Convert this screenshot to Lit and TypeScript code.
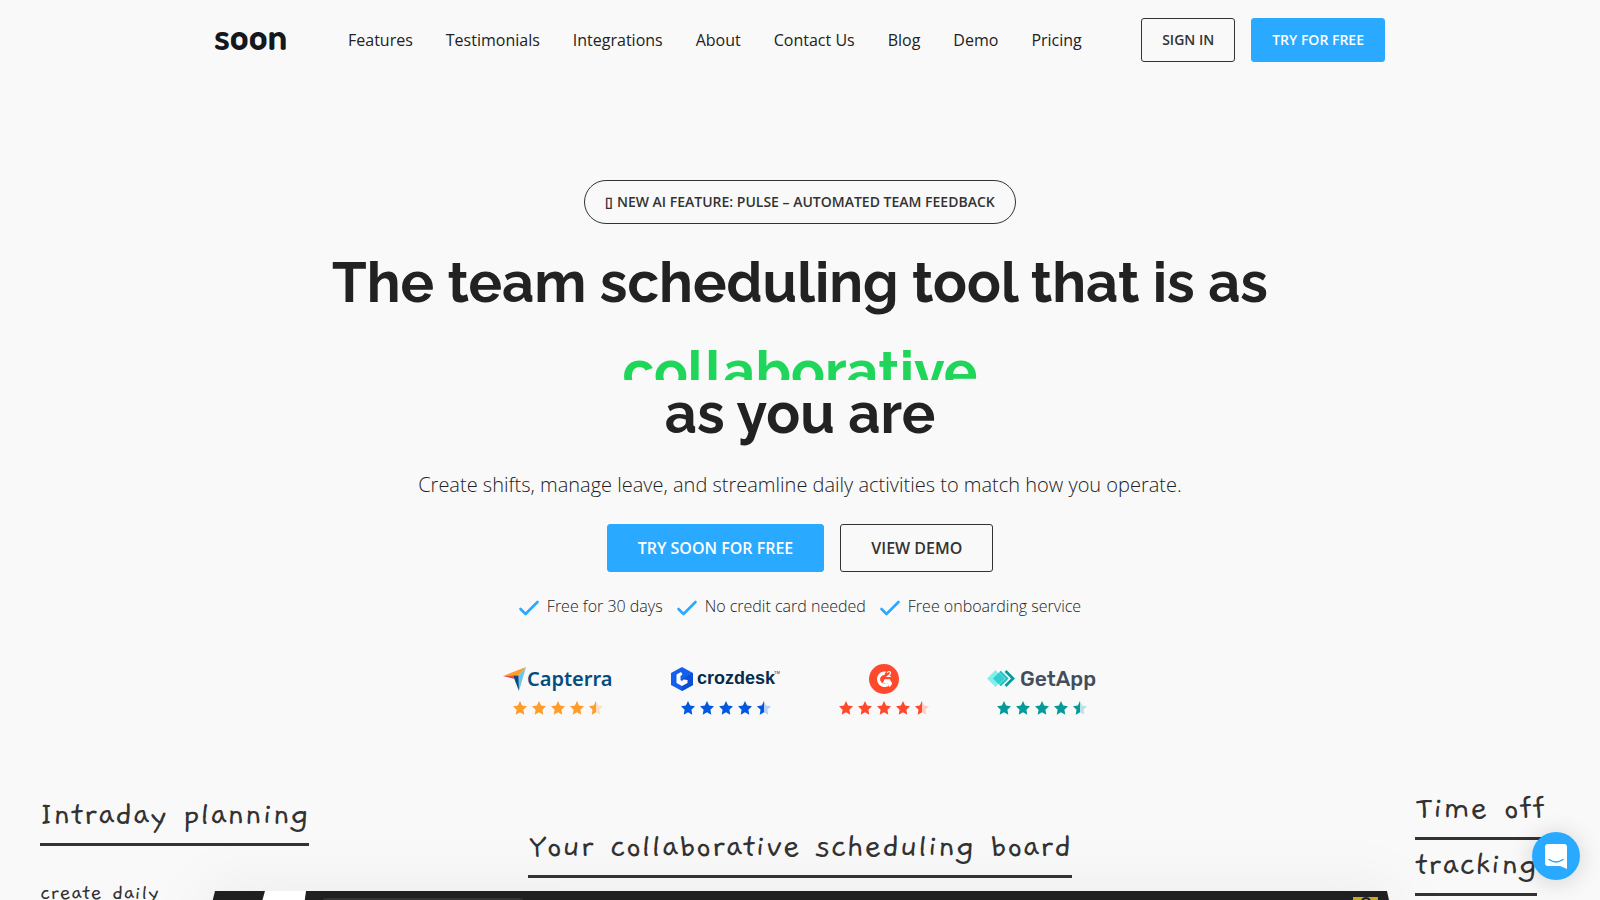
import { LitElement, html, css, svg } from "lit";
import { customElement, property } from "lit/decorators.js";

const STAR = "M7 0 L9.1 4.6 L14 5.2 L10.4 8.7 L11.3 13.8 L7 11.3 L2.7 13.8 L3.6 8.7 L0 5.2 L4.9 4.6 Z";
const HALF = "M7 0 L4.9 4.6 L0 5.2 L3.6 8.7 L2.7 13.8 L7 11.3 Z";

@customElement("star-rating")
export class StarRating extends LitElement {
  @property() color = "#000";

  static styles = css`
    :host {
      display: block;
      height: 14px;
    }
    svg {
      display: block;
    }
  `;

  render() {
    return html`<svg width="90" height="14" viewBox="0 0 90 14" role="img" aria-label="4.5 out of 5 stars" fill=${this.color}>
      ${[0, 1, 2, 3].map((i) => svg`<path d=${STAR} transform="translate(${i * 19} 0)"></path>`)}
      <path d=${STAR} transform="translate(76 0)" opacity="0.25"></path>
      <path d=${HALF} transform="translate(76 0)"></path>
    </svg>`;
  }
}

const capterra = html`<svg width="110" height="30" viewBox="0 0 110 30" role="img" aria-label="Capterra">
  <path d="M0 12 L23 3 L15.500 11.500 Z" fill="#ff9d28"></path>
  <path d="M15.500 11.500 L23 3 L16 27 Z" fill="#68c5ed"></path>
  <path d="M10 11.500 L15.500 11.500 L16 27 Z" fill="#044d80"></path>
  <path d="M0 12 L10 11.500 L11.500 15 Z" fill="#e54747"></path>
  <text class="noto" x="24" y="22" font-size="20" fill="#044d80">Capterra</text>
</svg>`;

const crozdesk = html`<svg width="110" height="30" viewBox="0 0 110 30" role="img" aria-label="Crozdesk">
  <path d="M11 3 L22 9 V21 L11 27 L0 21 V9 Z" fill="#1360f0"></path>
  <path d="M22 9 V21 L11 27 V15 Z" fill="#0a4fd6"></path>
  <path d="M10 8 L5.500 10.500 V19 L11 22 L16.500 19 V16 L12.500 15.500 L11 17 L9.500 16 V12 L11.500 10.500 Z" fill="#fff"></path>
  <text class="sans" x="26" y="20" font-size="18" font-weight="700" fill="#052c4c">crozdesk</text>
  <text class="sans" x="103" y="10" font-size="4" fill="#052c4c">TM</text>
</svg>`;

const g2 = html`<svg width="30" height="30" viewBox="0 0 30 30" role="img" aria-label="G2">
  <circle cx="15" cy="15" r="15" fill="#ff492c"></circle>
  <path d="M17 7.500 A7.800 7.800 0 1 0 20 21.800 L18 18.500 A4.200 4.200 0 1 1 15.400 11.100 Z" fill="#fff"></path>
  <path d="M15.600 15.300 H20.800 L23.200 19.500 L20.800 23.200 L18.600 19.300 H13.800 Z" fill="#fff"></path>
  <path d="M18.300 8.800 Q18.600 7.500 20 7.500 Q21.600 7.600 21.500 9 Q21.400 10.300 18.700 12.300 H21.800" fill="none" stroke="#fff" stroke-width="1.200"></path>
</svg>`;

const getapp = html`<svg width="110" height="30" viewBox="0 0 110 30" role="img" aria-label="GetApp">
  <path d="M8.500 6 L17 14.500 L8.500 23 L0 14.500 Z" fill="#7ff0ee"></path>
  <path d="M12 8.500 L18 14.500 L12 20.500 L6 14.500 Z" fill="#2fd0cf"></path>
  <path d="M13 7.500 L20 14.500 L13 21.500" fill="none" stroke="#24bfc0" stroke-width="2.400"></path>
  <path d="M18.500 7 L26 14.500 L18.500 22" fill="none" stroke="#089b9d" stroke-width="2.800"></path>
  <text class="rubik" x="33" y="22" font-size="21" fill="#434d5b">GetApp</text>
</svg>`;

const check = html`<svg class="check" width="20" height="16" viewBox="0 0 20 16" aria-hidden="true">
  <path d="M1.500 9 L6.500 14 L18.500 2" fill="none" stroke="#29a9ff" stroke-width="2.600" stroke-linecap="round" stroke-linejoin="round"></path>
</svg>`;

@customElement("app-root")
export class AppRoot extends LitElement {
  static styles = css`
    :host {
      display: block;
      height: 100vh;
      overflow: hidden;
      background: #f9f9f9;
      color: #222;
      font: 400 16px/24px "Open Sans", sans-serif;
    }
    * {
      box-sizing: border-box;
    }
    h1,
    h2,
    p,
    ul {
      margin: 0;
      padding: 0;
    }
    ul {
      list-style: none;
    }
    a {
      color: inherit;
      text-decoration: none;
    }
    svg {
      display: block;
      overflow: visible;
    }
    .header {
      display: flex;
      align-items: center;
      max-width: 1170px;
      height: 80px;
      margin: 0 auto;
    }
    .brand {
      width: 133px;
    }
    .brand-text {
      font: 700 38px Dosis, "Roboto Condensed", Roboto, sans-serif;
    }
    .nav {
      display: flex;
      flex: 1;
      gap: 33px;
    }
    .actions {
      display: flex;
      gap: 16px;
    }
    .btn {
      display: flex;
      align-items: center;
      height: 44px;
      padding: 0 20px;
      border: 1px solid #333;
      border-radius: 3px;
      color: #333;
      font-size: 14px;
      font-weight: 600;
      text-transform: uppercase;
      white-space: nowrap;
    }
    .btn.primary {
      border-color: #29a9ff;
      background: #29a9ff;
      color: #fff;
    }
    .btn.large {
      height: 48px;
      padding: 0 30px;
      font-size: 16px;
    }
    .btn.pill {
      border-radius: 22px;
    }
    .hero {
      display: flex;
      flex-direction: column;
      align-items: center;
      padding-top: 100px;
    }
    .title {
      margin-top: 25px;
      font: 700 56px/67px Raleway, Lato, sans-serif;
      text-align: center;
    }
    .title span {
      display: block;
    }
    .title .rotator {
      height: 64px;
      padding-top: 22px;
      overflow: hidden;
      color: #1fd65b;
    }
    .lead {
      margin-top: 23px;
      font-size: 20px;
      font-weight: 300;
      line-height: 30px;
    }
    .cta {
      display: flex;
      gap: 16px;
      margin-top: 24px;
    }
    .perks {
      display: flex;
      gap: 14px;
      margin-top: 22px;
      font-weight: 300;
    }
    .perks li {
      display: flex;
      align-items: center;
      gap: 8px;
    }
    .check {
      margin-top: 4px;
    }
    .ratings {
      display: flex;
      gap: 58px;
      margin-top: 46px;
    }
    .ratings li {
      display: flex;
      flex-direction: column;
      align-items: center;
      gap: 7px;
    }
    .noto {
      font-family: "Noto Sans", sans-serif;
      font-weight: 600;
    }
    .sans {
      font-family: "Liberation Sans", sans-serif;
    }
    .rubik {
      font-family: Rubik, Inter, sans-serif;
      font-weight: 500;
    }
    .showcase {
      display: grid;
      grid-template-columns: 1fr auto 1fr;
      grid-template-rows: auto auto;
      padding: 66px 40px 0;
      color: #333;
    }
    .note {
      font-family: Gaegu, Lato, sans-serif;
    }
    .note h2 {
      font-size: 37px;
      font-weight: 400;
      line-height: 56px;
    }
    .note h2 span {
      padding-bottom: 10px;
      border-bottom: 3px solid #333;
    }
    .note p {
      margin-top: 34px;
      font-size: 24px;
      line-height: 32px;
    }
    .left {
      grid-area: 1 / 1 / 3 / 2;
      padding-top: 6px;
    }
    .center {
      grid-area: 1 / 1 / 2 / 4;
      justify-self: center;
      padding: 38px 0 16px;
      white-space: nowrap;
    }
    .right {
      grid-area: 1 / 3 / 3 / 4;
      justify-self: end;
      width: 145px;
    }
    .board {
      grid-area: 2 / 1 / 3 / 4;
      justify-self: center;
      width: 1176px;
      filter: drop-shadow(0 0 30px rgba(0, 0, 0, 0.06));
    }
    .chat {
      position: fixed;
      right: 20px;
      bottom: 20px;
      display: grid;
      place-items: center;
      width: 48px;
      height: 48px;
      padding: 0;
      border: 0;
      border-radius: 50%;
      background: #29a9ff;
      box-shadow: 0 2px 24px rgba(0, 0, 0, 0.16);
    }
  `;

  private links = ["Features", "Testimonials", "Integrations", "About", "Contact Us", "Blog", "Demo", "Pricing"];
  private perks = ["Free for 30 days", "No credit card needed", "Free onboarding service"];
  private ratings = [
    { logo: capterra, color: "#ff9d28" },
    { logo: crozdesk, color: "#0057e0" },
    { logo: g2, color: "#ff492c" },
    { logo: getapp, color: "#039a99" },
  ];

  render() {
    return html`
      <header class="header">
        <a class="brand" href="#">
          <svg width="76" height="30" viewBox="0 0 76 30" role="img" aria-label="soon">
            <text class="brand-text" x="-1" y="25" fill="#14181c">soon</text>
          </svg>
        </a>
        <nav class="nav">${this.links.map((l) => html`<a href="#">${l}</a>`)}</nav>
        <div class="actions">
          <a class="btn" href="#">Sign in</a>
          <a class="btn primary" href="#">Try for free</a>
        </div>
      </header>

      <main>
        <section class="hero">
          <a class="btn pill" href="#">▯ New AI feature: Pulse – Automated team feedback</a>
          <h1 class="title">
            <span>The team scheduling tool that is as</span>
            <span class="rotator">collaborative</span>
            <span>as you are</span>
          </h1>
          <p class="lead">Create shifts, manage leave, and streamline daily activities to match how you operate.</p>
          <div class="cta">
            <a class="btn large primary" href="#">Try Soon for free</a>
            <a class="btn large" href="#">View demo</a>
          </div>
          <ul class="perks">
            ${this.perks.map((p) => html`<li>${check}${p}</li>`)}
          </ul>
          <ul class="ratings">
            ${this.ratings.map((r) => html`<li>${r.logo}<star-rating color=${r.color}></star-rating></li>`)}
          </ul>
        </section>

        <section class="showcase">
          <svg class="board" height="60" viewBox="0 0 1176 60" aria-hidden="true">
            <path d="M3 0 H1175 L1188 60 H-12 Z" fill="#202020"></path>
            <path d="M53 0 H94 L86 60 H36 Z" fill="#fff"></path>
            <rect x="111" y="7" width="200" height="60" rx="3" fill="#333"></rect>
            <rect x="1141" y="6" width="25" height="24" fill="#c9a820"></rect>
            <path d="M1150 9 Q1154 5 1158 9" fill="none" stroke="#202020" stroke-width="2"></path>
          </svg>
          <div class="note left">
            <h2><span>Intraday planning</span></h2>
            <p>create daily</p>
          </div>
          <div class="note center">
            <h2><span>Your collaborative scheduling board</span></h2>
          </div>
          <div class="note right">
            <h2><span>Time off tracking</span></h2>
          </div>
        </section>
      </main>

      <button class="chat" type="button" aria-label="Open chat">
        <svg width="22" height="25" viewBox="0 0 22 25" aria-hidden="true">
          <path d="M3 0 H19 Q22 0 22 3 V25 L15 22 H3 Q0 22 0 19 V3 Q0 0 3 0 Z" fill="#fff"></path>
          <path d="M4 15.500 Q11 20.500 18 15.500" fill="none" stroke="#29a9ff" stroke-width="1.500" stroke-linecap="round"></path>
        </svg>
      </button>
    `;
  }
}
